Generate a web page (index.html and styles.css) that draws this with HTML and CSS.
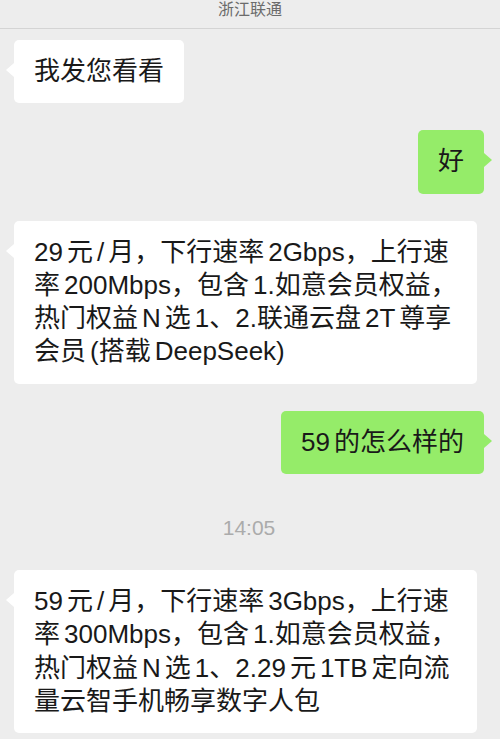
FILE: index.html
```html
<!DOCTYPE html>
<html lang="zh-CN">
<head>
  <meta charset="UTF-8">
  <meta name="viewport" content="width=device-width, initial-scale=1.0">
  <title>浙江联通</title>
  <link rel="stylesheet" href="styles.css">
</head>
<body>
  <header class="title-bar">浙江联通</header>

  <main class="messages">
    <div class="msg msg-in">
      <div class="bubble">我发您看看</div>
    </div>

    <div class="msg msg-out">
      <div class="bubble">好</div>
    </div>

    <div class="msg msg-in">
      <div class="bubble">29<span class="sp"></span>元<span class="sp"></span>/<span class="sp"></span>月，下行速率<span class="sp"></span>2Gbps，上行速<br>率<span class="sp"></span>200Mbps，包含<span class="sp"></span>1.如意会员权益，<br>热门权益<span class="sp"></span>N<span class="sp"></span>选<span class="sp"></span>1、2.联通云盘<span class="sp"></span>2T<span class="sp"></span>尊享<br>会员<span class="sp"></span>(搭载<span class="sp"></span>DeepSeek)</div>
    </div>

    <div class="msg msg-out">
      <div class="bubble">59<span class="sp"></span>的怎么样的</div>
    </div>

    <div class="time">14:05</div>

    <div class="msg msg-in">
      <div class="bubble">59<span class="sp"></span>元<span class="sp"></span>/<span class="sp"></span>月，下行速率<span class="sp"></span>3Gbps，上行速<br>率<span class="sp"></span>300Mbps，包含<span class="sp"></span>1.如意会员权益，<br>热门权益<span class="sp"></span>N<span class="sp"></span>选<span class="sp"></span>1、2.29<span class="sp"></span>元<span class="sp"></span>1TB<span class="sp"></span>定向流<br>量云智手机畅享数字人包</div>
    </div>
  </main>
</body>
</html>
```

FILE: styles.css
```css
body { margin: 0; background-color: #ededed; font-family: "Liberation Sans", "Noto Sans CJK SC", sans-serif; color: #191919; }

.title-bar { height: 27px; padding-top: 1px; line-height: 18px; text-align: center; font-size: 16px; color: #6b6b6b; border-bottom: 1px solid #d4d4d4; }

.messages { display: flex; flex-direction: column; gap: 27px; padding: 11px 16px 20px 14px; }

.msg { display: flex; }
.msg-out { justify-content: flex-end; }

.bubble { position: relative; padding: 15px 20px; font-size: 26px; line-height: 33.3px; white-space: nowrap; border-radius: 5px; background-color: #fff; }
.msg-out .bubble { background-color: #95ec69; }

/* the little tail pointing at the (cropped) avatar */
.bubble::before { content: ""; position: absolute; top: 23px; border-top: 7px solid transparent; border-bottom: 7px solid transparent; }
.msg-in .bubble::before { left: -8px; border-right: 8px solid #fff; }
.msg-out .bubble::before { right: -8px; border-left: 8px solid #95ec69; }

.sp { display: inline-block; width: 4px; }

.time { margin: 16px 0 5px; text-align: center; font-size: 21px; line-height: 21px; color: #ababab; }
```
